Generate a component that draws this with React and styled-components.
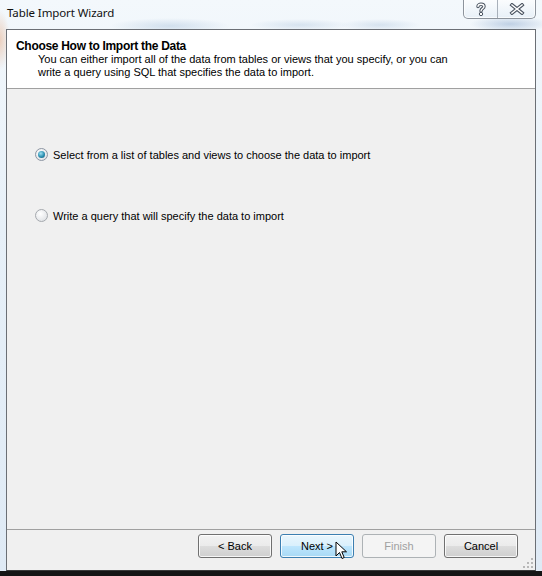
import React from "react";
import styled, { createGlobalStyle } from "styled-components";

const Global = createGlobalStyle`
  html, body { margin: 0; padding: 0; background: #1e1e1e; }
  body { width: 542px; height: 576px; overflow: hidden; }
  * { box-sizing: border-box; }
`;

const Window = styled.div`
  width: 542px;
  height: 576px;
  display: flex;
  flex-direction: column;
  background:
    radial-gradient(ellipse 60px 8px at 170px 26px, rgba(150,180,210,0.35), transparent),
    radial-gradient(ellipse 50px 6px at 300px 25px, rgba(150,180,210,0.3), transparent),
    radial-gradient(ellipse 40px 6px at 380px 25px, rgba(150,180,210,0.3), transparent),
    radial-gradient(ellipse 40px 8px at 510px 24px, rgba(130,160,200,0.45), transparent),
    radial-gradient(ellipse 10px 30px at 0px 40px, rgba(230,170,130,0.5), transparent),
    linear-gradient(180deg, #f3f8fc 0%, #e7f0f8 40%, #dfeaf5 100%);
  font-family: "Liberation Sans", Arial, sans-serif;
  border-bottom: 5px solid #151515;
`;

const TitleBar = styled.div`
  height: 29px;
  display: flex;
  align-items: flex-start;
  padding-left: 7px;
`;

const Title = styled.div`
  font-family: "Noto Sans", "Open Sans", sans-serif;
  font-size: 11.5px;
  color: #111;
  padding-top: 5px;
  letter-spacing: -0.1px;
`;

const Controls = styled.div`
  margin-left: auto;
  margin-right: 6px;
  display: flex;
  height: 20px;
  margin-top: -1px;
  border: 1px solid #8c939c;
  border-top: none;
  border-radius: 0 0 5px 5px;
  background: linear-gradient(180deg, rgba(255,255,255,0.7), rgba(225,235,245,0.6));
  box-shadow: inset 0 0 0 1px rgba(255,255,255,0.7);
`;

const CtrlBtn = styled.div`
  width: ${(p) => p.$w}px;
  display: flex;
  align-items: center;
  justify-content: center;
  & + & { border-left: 1px solid #a8b0ba; }
`;

const Client = styled.div`
  flex: 1;
  margin: 0 6px 0 6px;
  display: flex;
  flex-direction: column;
  border: 1px solid #6b6f75;
  border-bottom-color: #3a3a3a;
  background: #f0f0f0;
`;

const Header = styled.div`
  height: 59px;
  background: #ffffff;
  border-bottom: 1px solid #a0a0a0;
  padding: 9px 0 0 9px;
`;

const HeaderTitle = styled.div`
  font-size: 12px;
  font-weight: bold;
  color: #000;
  letter-spacing: -0.3px;
  line-height: 14px;
`;

const HeaderDesc = styled.div`
  margin: 0 0 0 22px;
  font-size: 11px;
  line-height: 13px;
  color: #000;
  white-space: nowrap;
`;

const Body = styled.div`
  flex: 1;
  padding: 59px 0 0 28px;
  display: flex;
  flex-direction: column;
  gap: 48px;
`;

const Option = styled.label`
  display: flex;
  align-items: center;
  gap: 5px;
  font-size: 11px;
  color: #000;
  height: 13px;
`;

const RadioCircle = styled.span`
  width: 13px;
  height: 13px;
  border-radius: 50%;
  border: 1px solid ${(p) => (p.$checked ? "#8d96a3" : "#a5a9ae")};
  background: radial-gradient(circle at 40% 35%, #ffffff, #e4e6e9 70%, #d6d9dd);
  display: flex;
  align-items: center;
  justify-content: center;
  flex-shrink: 0;
  &::after {
    content: "";
    display: ${(p) => (p.$checked ? "block" : "none")};
    width: 7px;
    height: 7px;
    border-radius: 50%;
    background: radial-gradient(circle at 40% 35%, #9fe0f2, #2a8fb0 55%, #13506e);
  }
`;

const Footer = styled.div`
  height: 41px;
  border-top: 1px solid #a0a0a0;
  display: flex;
  justify-content: flex-end;
  align-items: flex-start;
  gap: 8px;
  padding: 4px 17px 0 0;
  position: relative;
`;

const Button = styled.div`
  position: relative;
  width: 74px;
  height: 24px;
  border-radius: 3px;
  display: flex;
  align-items: center;
  justify-content: center;
  font-size: 11px;
  color: ${(p) => (p.$variant === "disabled" ? "#a0a0a0" : "#000")};
  border: 1px solid
    ${(p) =>
      p.$variant === "hover" ? "#3c7fb1" : p.$variant === "disabled" ? "#adb2b5" : "#707070"};
  background: ${(p) =>
    p.$variant === "hover"
      ? "linear-gradient(180deg, #eaf6fd 0%, #d9f0fc 50%, #bee6fd 50%, #a7d9f5 100%)"
      : p.$variant === "disabled"
      ? "#f4f4f4"
      : "linear-gradient(180deg, #f2f2f2 0%, #ebebeb 50%, #dddddd 50%, #cfcfcf 100%)"};
  box-shadow: ${(p) => (p.$variant === "disabled" ? "none" : "inset 0 0 0 1px rgba(255,255,255,0.8)")};
`;

const Cursor = styled.svg`
  position: absolute;
  left: 54px;
  top: 6px;
`;

const Grip = styled.svg`
  position: absolute;
  right: 1px;
  bottom: 1px;
`;

function HelpIcon() {
  return (
    <svg width="12" height="14" viewBox="0 0 12 14">
      <path d="M3 4.5 C3 1.5 9 1.5 9 4.5 C9 6.5 6 6.5 6 9" fill="none" stroke="#4a5360" strokeWidth="3.4" strokeLinecap="round" />
      <path d="M3 4.5 C3 1.5 9 1.5 9 4.5 C9 6.5 6 6.5 6 9" fill="none" stroke="#ffffff" strokeWidth="1.4" strokeLinecap="round" />
      <circle cx="6" cy="12" r="1.7" fill="#fff" stroke="#4a5360" strokeWidth="1" />
    </svg>
  );
}

function CloseIcon() {
  return (
    <svg width="16" height="12" viewBox="0 0 16 12">
      <path d="M3 2 L13 10 M13 2 L3 10" fill="none" stroke="#4a5360" strokeWidth="3.6" strokeLinecap="square" />
      <path d="M3 2 L13 10 M13 2 L3 10" fill="none" stroke="#ffffff" strokeWidth="1.6" strokeLinecap="square" />
    </svg>
  );
}

export default function App() {
  return (
    <>
      <Global />
      <Window>
        <TitleBar>
          <Title>Table Import Wizard</Title>
          <Controls>
            <CtrlBtn $w={33}>
              <HelpIcon />
            </CtrlBtn>
            <CtrlBtn $w={38}>
              <CloseIcon />
            </CtrlBtn>
          </Controls>
        </TitleBar>
        <Client>
          <Header>
            <HeaderTitle>Choose How to Import the Data</HeaderTitle>
            <HeaderDesc>
              You can either import all of the data from tables or views that you specify, or you can
              <br />
              write a query using SQL that specifies the data to import.
            </HeaderDesc>
          </Header>
          <Body>
            <Option>
              <RadioCircle $checked />
              Select from a list of tables and views to choose the data to import
            </Option>
            <Option>
              <RadioCircle />
              Write a query that will specify the data to import
            </Option>
          </Body>
          <Footer>
            <Button>&lt; Back</Button>
            <Button $variant="hover">
              Next &gt;
              <Cursor width="13" height="20" viewBox="0 0 13 20">
                <path d="M1 1 L1 15 L4.5 11.5 L7 17.5 L9.2 16.5 L6.8 10.8 L11.5 10.8 Z" fill="#ffffff" stroke="#000" strokeWidth="1" strokeLinejoin="miter" />
              </Cursor>
            </Button>
            <Button $variant="disabled">Finish</Button>
            <Button>Cancel</Button>
            <Grip width="12" height="12" viewBox="0 0 12 12">
              {[
                [9, 1], [9, 5], [5, 5], [9, 9], [5, 9], [1, 9],
              ].map(([x, y], i) => (
                <rect key={i} x={x} y={y} width="2" height="2" fill="#b8b8b8" />
              ))}
            </Grip>
          </Footer>
        </Client>
      </Window>
    </>
  );
}
